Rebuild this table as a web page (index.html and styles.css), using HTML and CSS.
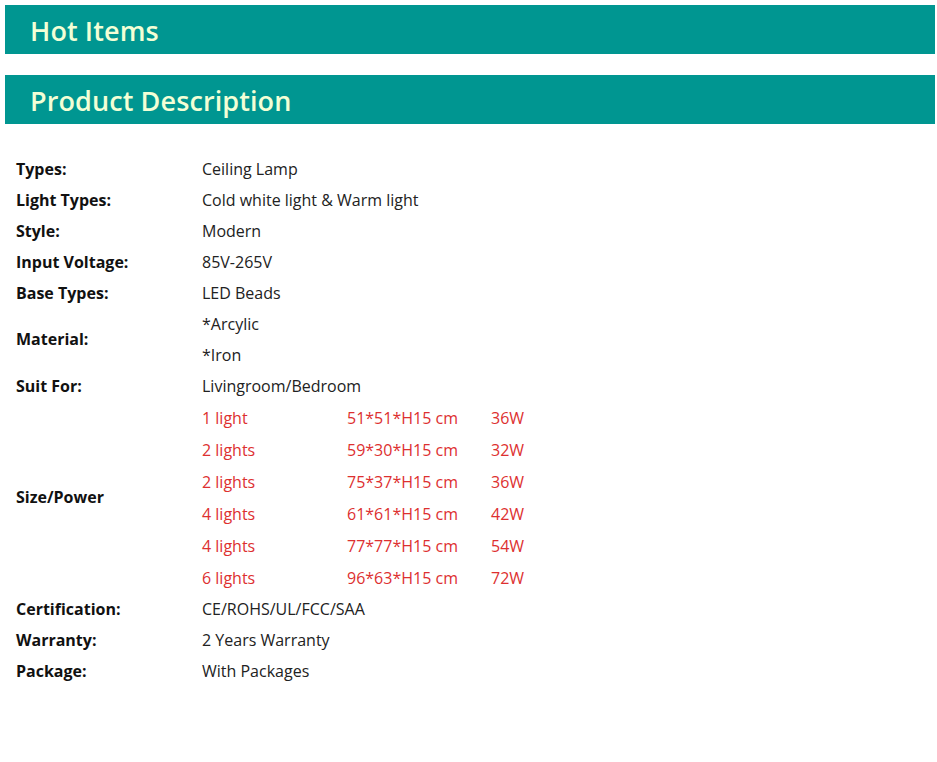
FILE: index.html
```html
<!DOCTYPE html>
<html>
<head>
<meta charset="utf-8">
<link rel="stylesheet" href="styles.css">
</head>
<body>
<div class="page">
  <div class="bar"><h2>Hot Items</h2></div>
  <div class="bar bar2"><h2>Product Description</h2></div>
  <div class="specs">
    <div class="label">Types:</div><div class="val">Ceiling Lamp</div>
    <div class="label">Light Types:</div><div class="val">Cold white light &amp; Warm light</div>
    <div class="label">Style:</div><div class="val">Modern</div>
    <div class="label">Input Voltage:</div><div class="val">85V-265V</div>
    <div class="label">Base Types:</div><div class="val">LED Beads</div>
    <div class="label span2">Material:</div><div class="val">*Arcylic</div><div class="val">*Iron</div>
    <div class="label">Suit For:</div><div class="val">Livingroom/Bedroom</div>
    <div class="label span6">Size/Power</div>
    <div class="size"><span>1 light</span><span>51*51*H15 cm</span><span>36W</span></div>
    <div class="size"><span>2 lights</span><span>59*30*H15 cm</span><span>32W</span></div>
    <div class="size"><span>2 lights</span><span>75*37*H15 cm</span><span>36W</span></div>
    <div class="size"><span>4 lights</span><span>61*61*H15 cm</span><span>42W</span></div>
    <div class="size"><span>4 lights</span><span>77*77*H15 cm</span><span>54W</span></div>
    <div class="size"><span>6 lights</span><span>96*63*H15 cm</span><span>72W</span></div>
    <div class="label">Certification:</div><div class="val">CE/ROHS/UL/FCC/SAA</div>
    <div class="label">Warranty:</div><div class="val">2 Years Warranty</div>
    <div class="label">Package:</div><div class="val">With Packages</div>
  </div>
</div>
</body>
</html>
```

FILE: styles.css
```css
html, body {
  margin: 0;
  padding: 0;
  background: #ffffff;
}
body {
  font-family: "Open Sans", "Liberation Sans", sans-serif;
  color: #111111;
}
.page {
  padding: 5px 2px 0 5px;
}
.bar {
  box-sizing: border-box;
  background: #009691;
  height: 49px;
  display: flex;
  align-items: center;
  padding-left: 25px;
  padding-top: 2px;
}
.bar2 {
  margin-top: 21px;
}
.bar h2 {
  margin: 0;
  font-size: 27px;
  font-weight: 600;
  color: #f2ffd6;
  letter-spacing: 0.1px;
}
.specs {
  margin-top: 29px;
  padding-left: 11px;
  display: grid;
  grid-template-columns: 186px 1fr;
  font-size: 16px;
}
.label, .val {
  display: flex;
  align-items: center;
  height: 31px;
}
.label {
  font-weight: 700;
  color: #111111;
}
.val {
  color: #222222;
}
.span2 {
  grid-row: span 2;
  height: auto;
}
.span6 {
  grid-row: span 6;
  height: auto;
}
.size {
  box-sizing: border-box;
  display: grid;
  grid-template-columns: 145px 144px auto;
  align-items: center;
  height: 32px;
  padding-top: 2px;
  color: #dd3030;
  grid-column: 2;
}
```
